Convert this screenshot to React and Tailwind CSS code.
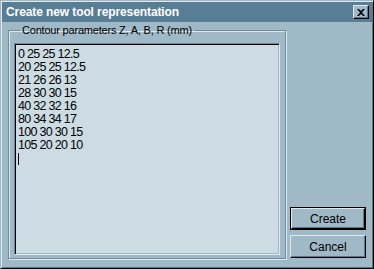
const LINES = [
  "0 25 25 12.5",
  "20 25 25 12.5",
  "21 26 26 13",
  "28 30 30 15",
  "40 32 32 16",
  "80 34 34 17",
  "100 30 30 15",
  "105 20 20 10",
];

function Button({ children, isDefault }) {
  const inner = (
    <div className="h-full w-full flex items-center justify-center border border-t-[#dfe9ee] border-l-[#dfe9ee] border-r-black border-b-black bg-[#9fb9c6] shadow-[inset_-1px_-1px_0_#5b7688] text-[12px] text-black">
      {children}
    </div>
  );
  if (isDefault) {
    return <div className="h-[23px] w-[76px] border border-black">{inner}</div>;
  }
  return <div className="h-[23px] w-[76px]">{inner}</div>;
}

export default function App() {
  return (
    <div
      className="w-[374px] h-[269px] flex flex-col bg-[#9fb9c6] border border-t-[#9fb9c6] border-l-[#9fb9c6] border-r-black border-b-black shadow-[inset_1px_1px_0_#dfe9ee,inset_-1px_-1px_0_#5b7688] p-[1px]"
      style={{ fontFamily: '"Liberation Sans", Arial, sans-serif' }}
    >
      {/* title bar */}
      <div className="h-[20px] flex items-center justify-between bg-[#587e96] pl-[4px] pr-[3px]">
        <span className="text-white font-bold text-[12px] tracking-[-0.1px]">
          Create new tool representation
        </span>
        <div className="w-[16px] h-[14px] flex items-center justify-center bg-[#9fb9c6] border border-t-[#dfe9ee] border-l-[#dfe9ee] border-r-black border-b-black shadow-[inset_-1px_-1px_0_#5b7688]">
          <svg width="8" height="7" viewBox="0 0 8 7">
            <path d="M0 0h2l2 2 2-2h2L5 3.5 8 7H6L4 5 2 7H0l3-3.5z" fill="#000" />
          </svg>
        </div>
      </div>

      {/* body */}
      <div className="flex-1 flex gap-[4px] pl-[6px] pr-[5px] pt-[2px] pb-[8px]">
        <fieldset className="w-[278px] border border-[#6f8b9d] shadow-[inset_1px_1px_0_#dfe9ee,1px_1px_0_#dfe9ee] px-[5px] pb-[3px] pt-[6px] flex flex-col">
          <legend className="ml-[6px] px-[2px] text-[11px] tracking-[-0.2px] leading-[13px] text-black">
            Contour parameters Z, A, B, R (mm)
          </legend>
          <div className="flex-1 border border-t-[#6a8799] border-l-[#6a8799] border-r-[#dfe9ee] border-b-[#dfe9ee] shadow-[inset_1px_1px_0_#000,inset_-1px_-1px_0_#9fb9c6] bg-[#cddce3] pl-[3px] pt-[4px]">
            <div className="text-[12.5px] tracking-[-0.7px] leading-[13px] text-black">
              {LINES.map((l) => (
                <div key={l}>{l}</div>
              ))}
              <div className="h-[13px] flex items-center">
                <div className="w-[1px] h-[12px] bg-black" />
              </div>
            </div>
          </div>
        </fieldset>

        <div className="flex flex-col justify-end gap-[5px] pb-[1px]">
          <Button isDefault>Create</Button>
          <Button>Cancel</Button>
        </div>
      </div>
    </div>
  );
}
